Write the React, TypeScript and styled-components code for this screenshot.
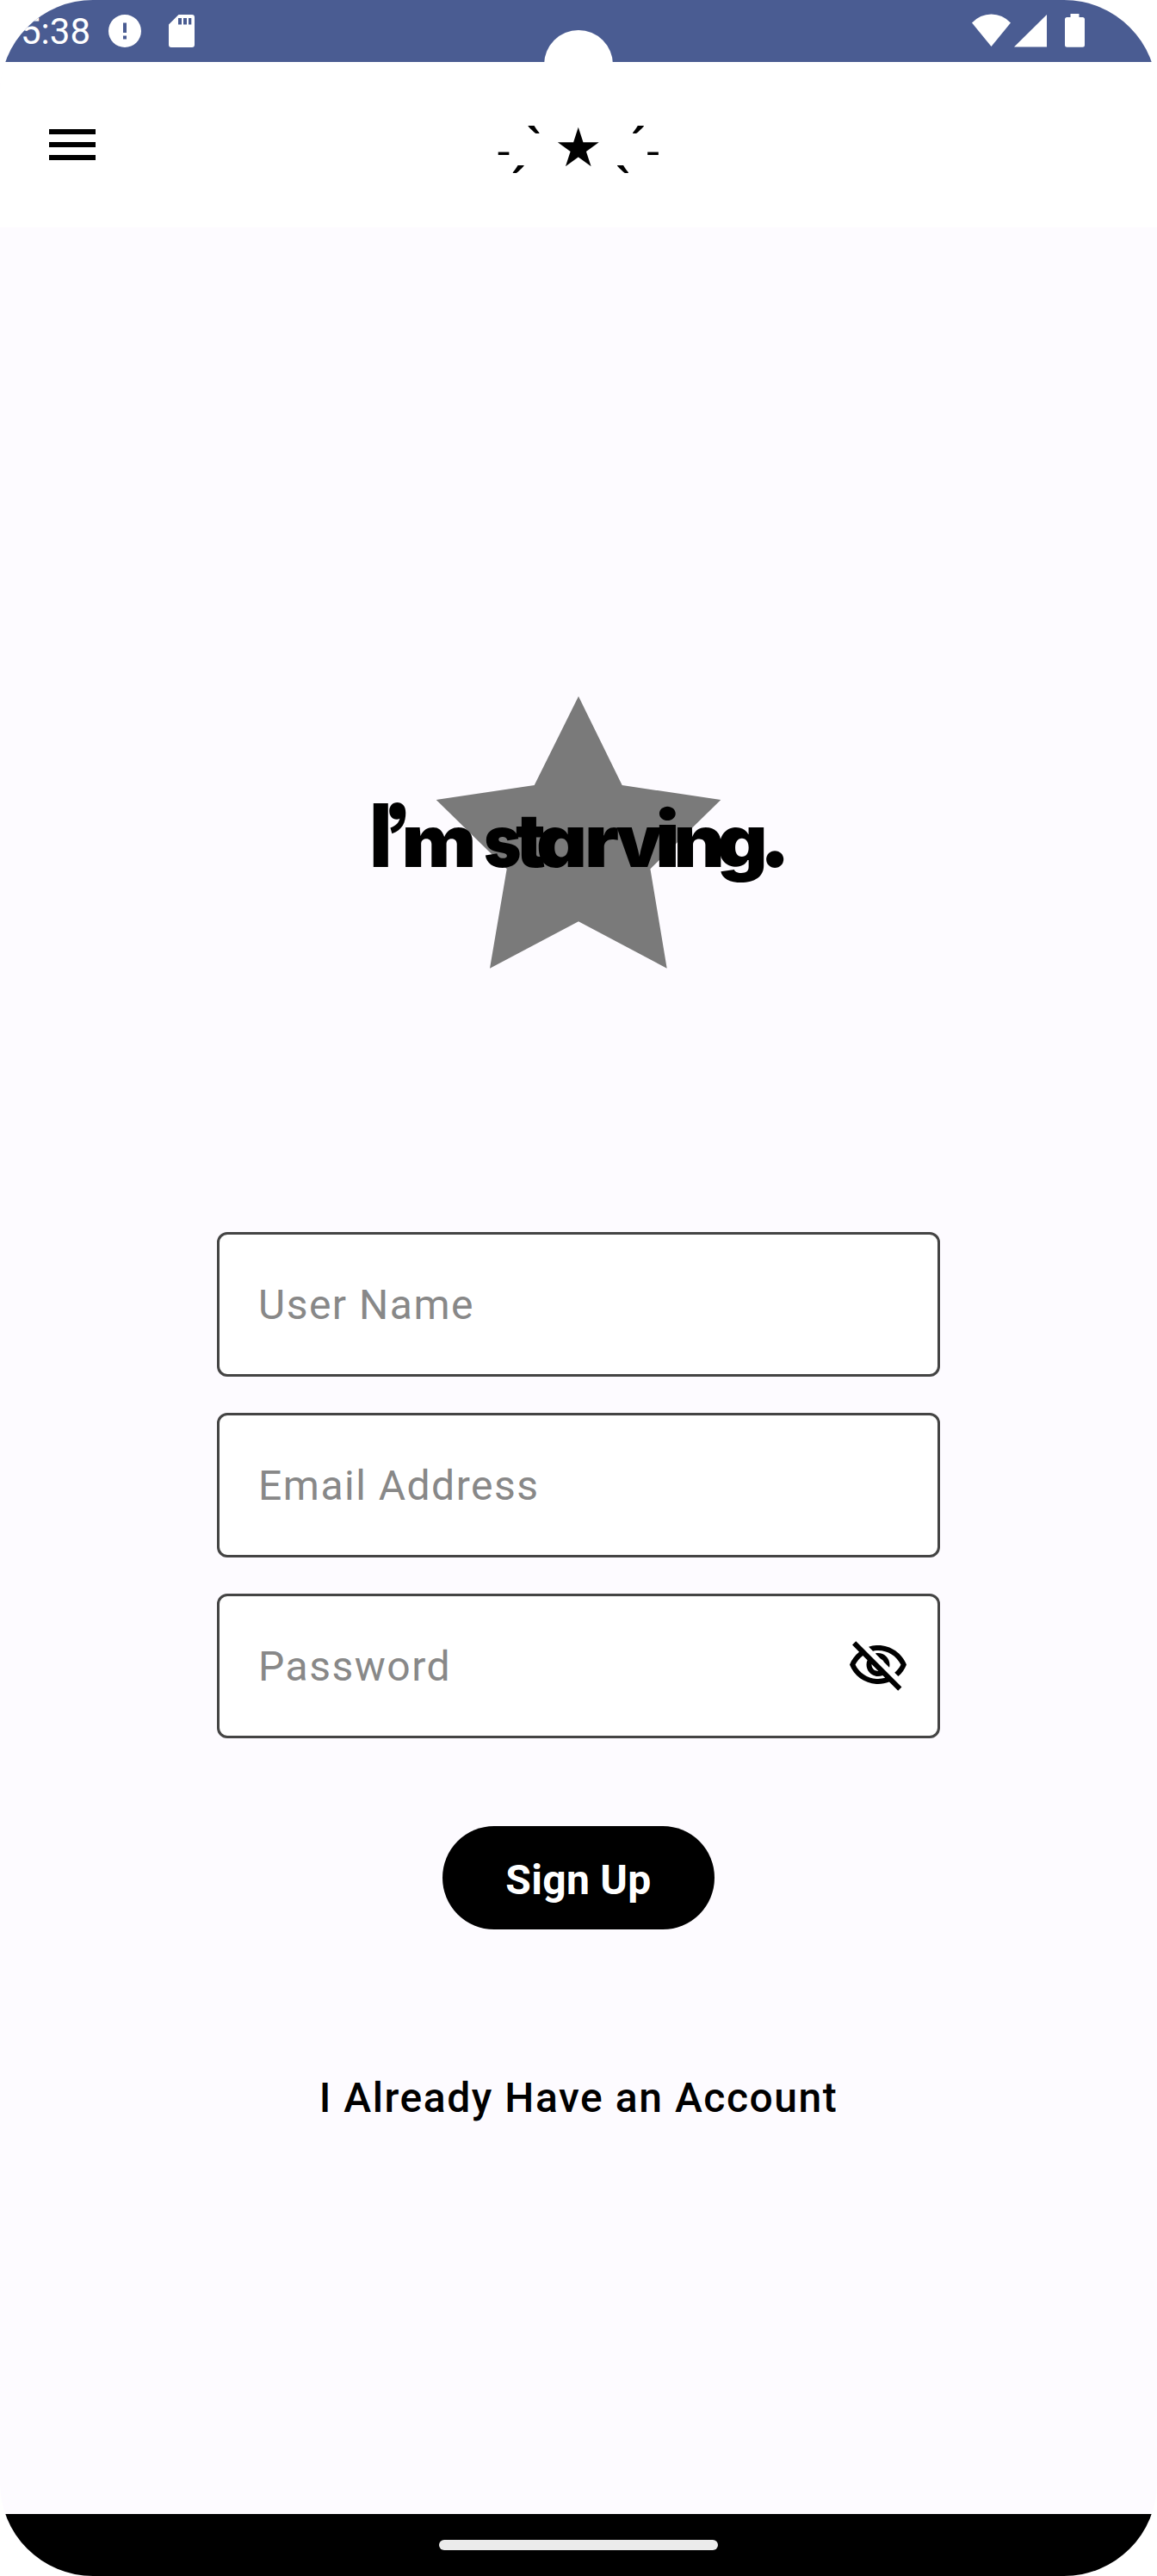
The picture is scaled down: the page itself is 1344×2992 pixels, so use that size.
import React from "react";
import styled, { createGlobalStyle } from "styled-components";

const GlobalStyle = createGlobalStyle`
  * { box-sizing: border-box; }
  body { margin: 0; background: #ffffff; }
`;

const Screen = styled.div`
  position: relative;
  display: flex;
  flex-direction: column;
  width: 1344px;
  height: 2992px;
  overflow: hidden;
  border-radius: 108px;
  background: #fdfbff;
  font-family: Roboto, "Noto Sans", sans-serif;
`;

const StatusBar = styled.header`
  display: flex;
  align-items: center;
  flex: none;
  height: 72px;
  padding: 0 84px 0 24px;
  background: #4a5c92;
  color: #ffffff;
`;

const Clock = styled.span`
  width: 102px;
  padding-top: 2px;
  font-size: 42px;
  line-height: 72px;
  white-space: nowrap;
`;

const StatusIcon = styled.svg`
  display: block;
  flex: none;
  height: 40px;
  fill: currentColor;
`;

const Spacer = styled.div`
  flex: 1;
`;

const CameraCutout = styled.div`
  position: absolute;
  top: 35px;
  left: 632px;
  width: 80px;
  height: 80px;
  border-radius: 50%;
  background: #ffffff;
`;

const TopBar = styled.nav`
  display: grid;
  grid-template-columns: 72px 1fr 72px;
  align-items: center;
  flex: none;
  height: 192px;
  padding: 0 48px;
  background: #ffffff;
`;

const MenuIcon = styled.svg`
  display: block;
  width: 72px;
  height: 72px;
`;

const Title = styled.h1`
  margin: 0;
  padding-top: 10px;
  text-align: center;
  font-family: Roboto, "Noto Sans", "DejaVu Sans", sans-serif;
  font-size: 57px;
  font-weight: 500;
  line-height: 72px;
  letter-spacing: 0.4px;
  white-space: pre;
`;

const TitleStar = styled.span`
  font-size: 62.5px;
  font-weight: 400;
  vertical-align: -4px;
`;

const TitleDash = styled.span`
  vertical-align: -6px;
`;

const Content = styled.main`
  display: flex;
  flex-direction: column;
  align-items: center;
  flex: 1;
  padding-top: 516px;
`;

const Logo = styled.svg`
  display: block;
  width: 544px;
  height: 370px;
`;

const Wordmark = styled.text`
  font-family: Inter, "Open Sans", sans-serif;
  font-weight: 900;
  font-feature-settings: "cv11", "ss03";
`;

const Form = styled.form`
  display: flex;
  flex-direction: column;
  gap: 42px;
  width: 840px;
  margin-top: 281px;
`;

const Field = styled.label`
  display: flex;
  align-items: center;
  justify-content: space-between;
  height: 168px;
  padding: 0 33px 0 45px;
  border: 3px solid #444444;
  border-radius: 12px;
  background: #ffffff;
  color: #888888;
  font-size: 48px;
  letter-spacing: 1.5px;
`;

const EyeIcon = styled.svg`
  display: block;
  width: 72px;
  height: 72px;
  fill: #000000;
`;

const SignUpButton = styled.button`
  width: 316px;
  height: 120px;
  margin-top: 102px;
  padding: 4px 0 0;
  border: 0;
  border-radius: 60px;
  background: #000000;
  color: #ffffff;
  font-family: inherit;
  font-size: 48px;
  font-weight: 700;
  letter-spacing: 0.3px;
`;

const AccountLink = styled.a`
  margin-top: 168px;
  color: #000000;
  font-size: 48px;
  font-weight: 500;
  line-height: 56px;
  letter-spacing: 1.55px;
`;

const NavigationBar = styled.footer`
  display: flex;
  align-items: center;
  justify-content: center;
  flex: none;
  height: 72px;
  background: #000000;
`;

const HomePill = styled.div`
  width: 324px;
  height: 12px;
  border-radius: 6px;
  background: #ebebeb;
`;

/* Tightly kerned wordmark: letter, x, font size, advance width. */
const FIRST_WORD: [string, number, number, number][] = [
  ["I", 429.8, 102, 25.1],
  ["’", 447, 102, 29.5],
  ["m", 466.5, 84, 86.9],
];
const SECOND_WORD: [string, number, number, number][] = [
  ["s", 562.1, 84, 43.5],
  ["t", 599, 87, 34.7],
  ["a", 623.1, 84, 59],
  ["r", 679, 84, 40.1],
  ["v", 716, 84, 53.1],
  ["i", 760.9, 90, 28.8],
  ["n", 782.4, 84, 59.4],
  ["g", 832.9, 84, 58.7],
  [".", 881.4, 100, 37.3],
];

const letters = (word: [string, number, number, number][]) =>
  word.map(([char, x, size, advance]) => (
    <tspan key={char} x={x} fontSize={size} textLength={advance} lengthAdjust="spacingAndGlyphs">
      {char}
    </tspan>
  ));

export default function App() {
  return (
    <>
      <GlobalStyle />
      <Screen>
        <StatusBar>
          <Clock>5:38</Clock>
          <StatusIcon width="38" viewBox="126 16 38 40">
            <path fillRule="evenodd" d="M145 17a19 19 0 1 0 0 38a19 19 0 1 0 0-38zM143 26.500h4V38h-4zM143 41.500h4v4h-4z" />
          </StatusIcon>
          <StatusIcon width="62" viewBox="164 16 62 40">
            <path fillRule="evenodd" d="M207.500 17H223q3 0 3 3V52q0 3-3 3H199q-3 0-3-3V28.500zM207 21v7.500h4V21zM213 21v7.500h4V21zM219 21v7.500h3.300V21z" />
          </StatusIcon>
          <Spacer />
          <StatusIcon width="131" viewBox="1129 16 131 40">
            <path d="M1129 26.500Q1138.500 16.500 1151.500 16.500T1174 26.500L1151.500 54z" />
            <path d="M1216 17V54.500H1178z" />
            <path d="M1243.500 16h10v4h4q2.500 0 2.500 2.500V52.300q0 2.500-2.500 2.500H1239.500q-2.500 0-2.500-2.500V22.500q0-2.500 2.500-2.500h4z" />
          </StatusIcon>
        </StatusBar>
        <TopBar>
          <MenuIcon viewBox="0 0 24 24">
            <path d="M3 18h18v-2H3v2zm0-5h18v-2H3v2zm0-7v2h18V6H3z" />
          </MenuIcon>
          <Title>
            <TitleDash>˗</TitleDash>ˏˋ <TitleStar>★</TitleStar> ˎˊ<TitleDash>˗</TitleDash>
          </Title>
        </TopBar>
        <Content>
          <Logo viewBox="400 780 544 370">
            <polygon
              fill="#7a7a7a"
              points="672,808.7 722.700,912 837.300,929 755.400,1009.300 774.700,1124.700 672,1070.300 569,1124.700 588.700,1009.300 506.700,929 620.700,912"
            />
            <Wordmark y="1007">
              {letters(FIRST_WORD)} {letters(SECOND_WORD)}
            </Wordmark>
          </Logo>
          <Form>
            <Field>User Name</Field>
            <Field>Email Address</Field>
            <Field>
              Password
              <EyeIcon viewBox="0 0 24 24">
                <path d="M12 6c3.790 0 7.170 2.130 8.820 5.500-.59 1.220-1.420 2.270-2.410 3.120l1.410 1.410c1.390-1.230 2.490-2.770 3.180-4.530C21.270 7.110 17 4 12 4c-1.270 0-2.490.2-3.640.57l1.650 1.650C10.660 6.090 11.320 6 12 6zm-1.070 1.140L13 9.210c.57.25 1.030.71 1.280 1.280l2.070 2.070c.08-.34.14-.7.14-1.070C16.500 9.010 14.480 7 12 7c-.37 0-.72.05-1.070.14zM2.010 3.870l2.680 2.680C3.060 7.830 1.770 9.530 1 11.500 2.730 15.890 7 19 12 19c1.520 0 2.980-.29 4.320-.82l3.420 3.420 1.410-1.410L3.420 2.450 2.010 3.870zm7.500 7.500l2.610 2.610c-.04.01-.08.02-.12.02-1.380 0-2.500-1.120-2.500-2.500 0-.05.01-.08.01-.13zm-3.400-3.400l1.750 1.750c-.23.55-.36 1.150-.36 1.780 0 2.480 2.020 4.500 4.500 4.500.63 0 1.230-.13 1.770-.36l.98.98c-.88.24-1.800.38-2.750.38-3.790 0-7.170-2.130-8.820-5.500.7-1.430 1.720-2.610 2.930-3.530z" />
              </EyeIcon>
            </Field>
          </Form>
          <SignUpButton>Sign Up</SignUpButton>
          <AccountLink>I Already Have an Account</AccountLink>
        </Content>
        <NavigationBar>
          <HomePill />
        </NavigationBar>
        <CameraCutout />
      </Screen>
    </>
  );
}
